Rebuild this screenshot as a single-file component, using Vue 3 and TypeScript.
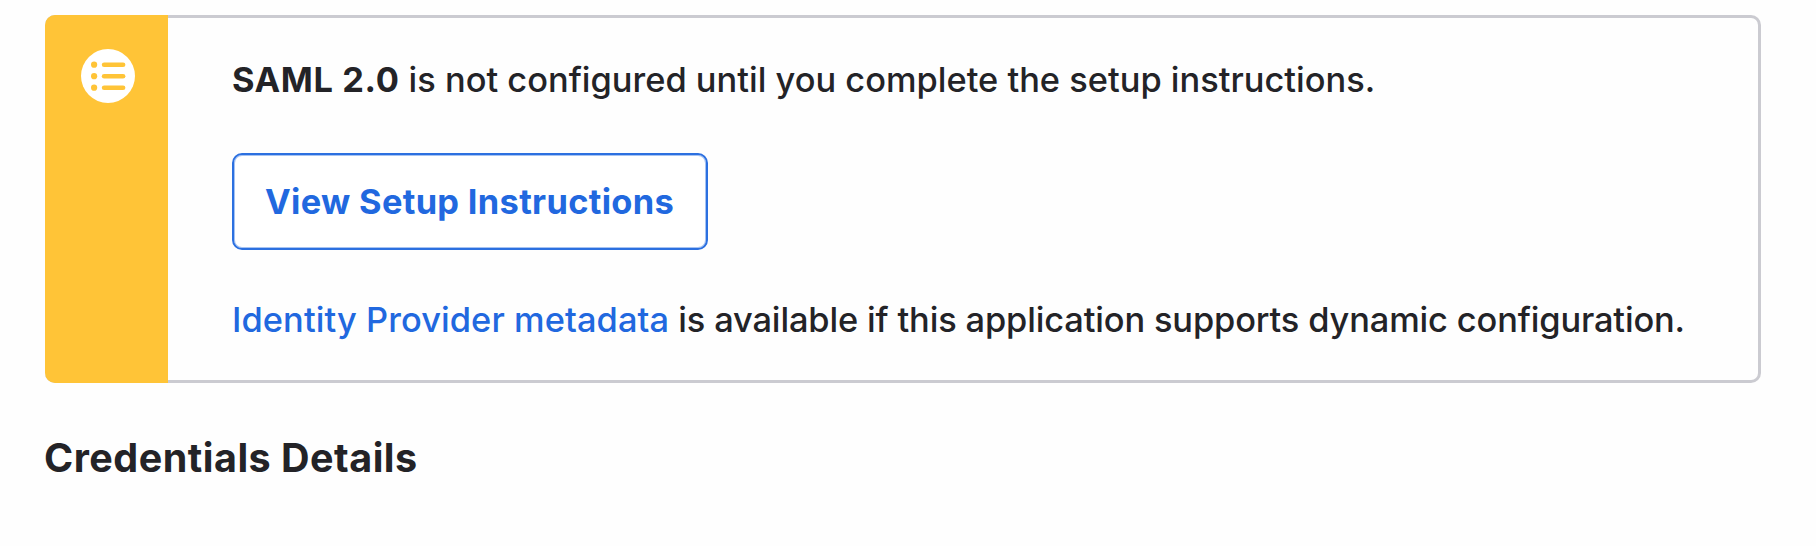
<script setup lang="ts">
const iconRows: number[] = [15.7, 27.2, 38.7]
</script>

<template>
  <main class="page">
    <section class="callout">
      <div class="callout-bar">
        <svg class="icon" viewBox="0 0 54 54" aria-hidden="true">
          <circle cx="27" cy="27" r="27" fill="#fff" />
          <g v-for="y in iconRows" :key="y" fill="#ffc437">
            <circle cx="13.1" :cy="y" r="3.1" />
            <rect x="20.8" :y="y - 2.3" width="23.6" height="4.6" rx="2.3" />
          </g>
        </svg>
      </div>
      <div class="callout-body">
        <p class="line"><strong>SAML 2.0</strong> <span class="status-text">is not configured until you complete the setup instructions.</span></p>
        <button class="setup" type="button">View Setup Instructions</button>
        <p class="line"><a>Identity Provider metadata</a> <span class="metadata-text">is available if this application supports dynamic configuration.</span></p>
      </div>
    </section>
    <h2 class="heading">Credentials Details</h2>
  </main>
</template>

<style>
body {
  background: #fefefe;
}
</style>

<style scoped>
.page {
  box-sizing: border-box;
  height: 546px;
  padding: 15px 55px 0 45px;
  color: #232327;
  font-family: Inter, "Liberation Sans", sans-serif;
  font-size: 34.4px;
  font-weight: 450;
  white-space: nowrap;
  overflow: hidden;
}
.callout {
  display: flex;
  box-sizing: border-box;
  width: 1716px;
  height: 368px;
  border: 3px solid #cbcbd1;
  border-left: 0;
  border-radius: 10px;
}
.callout-bar {
  display: flex;
  justify-content: center;
  box-sizing: border-box;
  width: 123px;
  margin: -3px 0;
  padding-top: 34px;
  border-radius: 10px 0 0 10px;
  background: #ffc437;
}
.icon {
  width: 54px;
  height: 54px;
  margin-left: 3px;
}
.callout-body {
  display: flex;
  flex-direction: column;
  align-items: flex-start;
  padding: 36px 0 0 64px;
}
.line {
  margin: 0;
  line-height: 52px;
}
strong {
  font-weight: 700;
  letter-spacing: 0.6px;
}
.status-text {
  letter-spacing: 0.01px;
}
.setup {
  box-sizing: border-box;
  width: 476px;
  height: 97px;
  margin: 47px 0 44px;
  padding: 0 0 0 31px;
  border: 2px solid #2c70e0;
  border-radius: 10px;
  background: #fff;
  box-shadow: inset 0 0 0 1px #2168df66;
  color: #2168df;
  font: inherit;
  font-weight: 700;
  letter-spacing: 0.33px;
  text-align: left;
}
a {
  color: #2168df;
  letter-spacing: 0.09px;
}
.metadata-text {
  letter-spacing: -0.14px;
}
.heading {
  margin: 49px 0 0 -1px;
  font-size: 39.5px;
  line-height: 52px;
  font-weight: 700;
  letter-spacing: 0.49px;
}
</style>
